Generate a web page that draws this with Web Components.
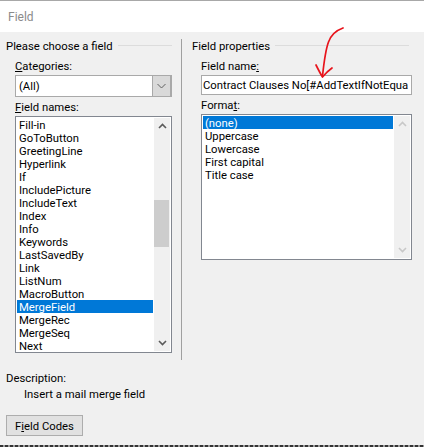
<!DOCTYPE html>
<html>
<head>
<meta charset="utf-8">
<title>Field</title>
<style>
  html, body { margin: 0; padding: 0; background: #f0f0f0; }
  body { font: 11.3px/13px Roboto, "Open Sans", sans-serif; color: #000; }
</style>
</head>
<body>
<field-dialog caption="Field">
  <div slot="left">
    <field-group legend="Please choose a field" line="54">
      <field-label top="7"><u>C</u>ategories:</field-label>
      <field-combo value="(All)"></field-combo>
      <field-label top="3"><u>F</u>ield names:</field-label>
      <field-list height="237" thumb-top="82" thumb-height="47" selected="MergeField"
        items="Fill-in,GoToButton,GreetingLine,Hyperlink,If,IncludePicture,IncludeText,Index,Info,Keywords,LastSavedBy,Link,ListNum,MacroButton,MergeField,MergeRec,MergeSeq,Next"></field-list>
    </field-group>
  </div>
  <div slot="right">
    <field-group legend="Field properties" line="134">
      <field-label top="7">Field name<u>:</u></field-label>
      <field-input value="Contract Clauses No[#AddTextIfNotEqua"></field-input>
      <field-label top="3">Forma<u>t</u>:</field-label>
      <field-list height="146" disabled-bar selected="(none)" items="(none),Uppercase,Lowercase,First capital,Title case"></field-list>
    </field-group>
  </div>
  <div slot="footer">
    <field-description title-text="Description:" text="Insert a mail merge field"></field-description>
    <field-button>F<u>i</u>eld Codes</field-button>
  </div>
</field-dialog>

<script>
class FieldDialog extends HTMLElement {
  constructor() {
    super();
    const shadow = this.attachShadow({ mode: 'open' });
    shadow.innerHTML = `
      <style>
        :host {
          display: block;
          position: relative;
          width: 424px;
          height: 447px;
          box-sizing: border-box;
          background: #f0f0f0;
          overflow: hidden;
        }
        .title {
          border-top: 1px solid #a8a8a8;
          background: #fff;
          padding: 10px 0 0 8px;
          box-sizing: border-box;
          height: 32px;
          font-size: 12px;
          color: #8b8b8b;
        }
        .columns {
          display: grid;
          grid-template-columns: 181px 1px 1fr;
          height: 328px;
          padding-top: 7px;
          box-sizing: border-box;
        }
        .divider { background: #a0a0a0; }
        .left { padding-left: 6px; padding-right: 9px; min-width: 0; }
        .right { padding-left: 10px; padding-right: 12px; min-width: 0; }
        .edge {
          position: absolute;
          left: 0; right: 0; bottom: 0;
          height: 2px;
          background: repeating-linear-gradient(90deg, #333 0 3px, #999 3px 5px);
        }
        .arrow { position: absolute; left: 310px; top: 24px; }
      </style>
      <div class="title"></div>
      <div class="columns">
        <div class="left"><slot name="left"></slot></div>
        <div class="divider"></div>
        <div class="right"><slot name="right"></slot></div>
      </div>
      <slot name="footer"></slot>
      <div class="edge"></div>
      <svg class="arrow" width="36" height="56" viewBox="0 0 36 56" fill="none" stroke="#e8141c" stroke-width="1.7" stroke-linecap="round" stroke-linejoin="round">
        <path d="M33 4C26 6.500 21 11 18.500 18C15.500 26 14 38 12.500 52"/>
        <path d="M6 41C8 45 10 49 12.500 53C15.500 49.500 18.500 46.500 22 44"/>
      </svg>
    `;
    shadow.querySelector('.title').textContent = this.getAttribute('caption') || '';
  }
}

class FieldGroup extends HTMLElement {
  constructor() {
    super();
    const shadow = this.attachShadow({ mode: 'open' });
    shadow.innerHTML = `
      <style>
        :host { display: block; }
        .legend { display: flex; gap: 5px; height: 13px; line-height: 15px; white-space: nowrap; }
        .legend i { display: block; height: 1px; background: #dcdcdc; margin-top: 6px; }
        .body { padding-left: 9px; }
      </style>
      <div class="legend"><span id="text"></span><i id="line"></i></div>
      <div class="body"><slot></slot></div>
    `;
    shadow.getElementById('text').textContent = this.getAttribute('legend') || '';
    shadow.getElementById('line').style.width = (this.getAttribute('line') || 50) + 'px';
  }
}

class FieldLabel extends HTMLElement {
  constructor() {
    super();
    const shadow = this.attachShadow({ mode: 'open' });
    shadow.innerHTML = `
      <style>
        :host { display: block; height: 13px; line-height: 15px; margin-bottom: 3px; }
      </style>
      <slot></slot>
    `;
  }
  connectedCallback() {
    this.style.marginTop = (this.getAttribute('top') || 0) + 'px';
  }
}

class FieldCombo extends HTMLElement {
  constructor() {
    super();
    const shadow = this.attachShadow({ mode: 'open' });
    shadow.innerHTML = `
      <style>
        :host {
          display: flex;
          height: 22px;
          box-sizing: border-box;
          border: 1px solid #a9a9a9;
          background: #fff;
        }
        .value { flex: 1; padding: 4px 0 0 3px; }
        .btn {
          width: 17px;
          background: #d9d9d9;
          border: 1px solid #a9a9a9;
          border-width: 0 1px 0 1px;
          display: flex;
          align-items: center;
          justify-content: center;
        }
      </style>
      <div class="value"></div>
      <div class="btn">
        <svg width="9" height="6" viewBox="0 0 9 6" fill="none" stroke="#606060" stroke-width="1"><path d="M.5 1 4.500 5 8.500 1"/></svg>
      </div>
    `;
    shadow.querySelector('.value').textContent = this.getAttribute('value') || '';
  }
}

class FieldInput extends HTMLElement {
  constructor() {
    super();
    const shadow = this.attachShadow({ mode: 'open' });
    shadow.innerHTML = `
      <style>
        :host {
          display: block;
          height: 20px;
          box-sizing: border-box;
          border: 1px solid #a9a9a9;
          background: #fff;
          padding: 3px 0 0 1px;
          white-space: nowrap;
        }
      </style>
      <div class="value"></div>
    `;
    shadow.querySelector('.value').textContent = this.getAttribute('value') || '';
  }
}

class FieldList extends HTMLElement {
  constructor() {
    super();
    const shadow = this.attachShadow({ mode: 'open' });
    const off = this.hasAttribute('disabled-bar');
    const arrow = off ? '#c8c8c8' : '#5a5a5a';
    shadow.innerHTML = `
      <style>
        :host {
          display: flex;
          box-sizing: border-box;
          border: 1px solid #828790;
          background: #fff;
          padding: 1px;
        }
        .items { flex: 1; min-width: 0; }
        .item { height: 13px; line-height: 15px; padding-left: 2px; white-space: nowrap; }
        .item.sel { background: #0078d7; color: #fff; }
        .bar {
          width: 16px;
          margin-left: 1px;
          background: #f0f0f0;
          display: flex;
          flex-direction: column;
          align-items: center;
          justify-content: space-between;
          position: relative;
          padding: 5px 0;
          box-sizing: border-box;
        }
        .thumb { position: absolute; left: 0; right: 1px; background: #cdcdcd; }
      </style>
      <div class="items"></div>
      <div class="bar">
        <svg width="9" height="6" viewBox="0 0 9 6" fill="none" stroke="${arrow}" stroke-width="1.6"><path d="M1 5 4.500 1.500 8 5"/></svg>
        <div class="thumb"></div>
        <svg width="9" height="6" viewBox="0 0 9 6" fill="none" stroke="${arrow}" stroke-width="1.6"><path d="M1 1 4.500 4.500 8 1"/></svg>
      </div>
    `;
    this.style.height = this.getAttribute('height') + 'px';
    const box = shadow.querySelector('.items');
    (this.getAttribute('items') || '').split(',').forEach((name) => {
      const row = document.createElement('div');
      row.className = 'item';
      if (name === this.getAttribute('selected')) row.classList.add('sel');
      row.textContent = name;
      box.appendChild(row);
    });
    const thumb = shadow.querySelector('.thumb');
    if (this.hasAttribute('thumb-top')) {
      thumb.style.top = this.getAttribute('thumb-top') + 'px';
      thumb.style.height = this.getAttribute('thumb-height') + 'px';
    } else {
      thumb.remove();
    }
  }
}

class FieldDescription extends HTMLElement {
  constructor() {
    super();
    const shadow = this.attachShadow({ mode: 'open' });
    shadow.innerHTML = `
      <style>
        :host { display: block; padding: 11px 0 0 6px; line-height: 15px; }
        .head, .text { height: 13px; }
        .text { margin: 3px 0 0 18px; }
      </style>
      <div class="head"></div>
      <div class="text"></div>
    `;
    shadow.querySelector('.head').textContent = this.getAttribute('title-text') || '';
    shadow.querySelector('.text').textContent = this.getAttribute('text') || '';
  }
}

class FieldButton extends HTMLElement {
  constructor() {
    super();
    const shadow = this.attachShadow({ mode: 'open' });
    shadow.innerHTML = `
      <style>
        :host {
          display: flex;
          align-items: center;
          justify-content: center;
          width: 77px;
          height: 21px;
          box-sizing: border-box;
          margin: 15px 0 0 6px;
          padding-top: 2px;
          background: #e1e1e1;
          border: 1px solid #adadad;
        }
      </style>
      <slot></slot>
    `;
  }
}

customElements.define('field-dialog', FieldDialog);
customElements.define('field-group', FieldGroup);
customElements.define('field-label', FieldLabel);
customElements.define('field-combo', FieldCombo);
customElements.define('field-input', FieldInput);
customElements.define('field-list', FieldList);
customElements.define('field-description', FieldDescription);
customElements.define('field-button', FieldButton);
</script>
</body>
</html>
